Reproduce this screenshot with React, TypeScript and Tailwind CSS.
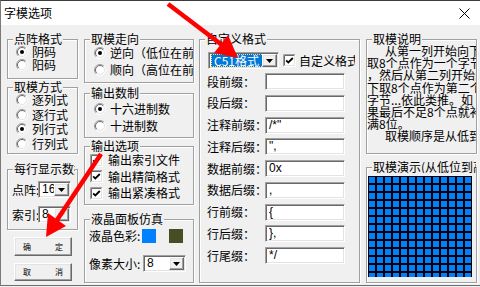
import React from 'react';

// Win classic 3D borders
const SUNKEN =
  'border border-t-[#a0a0a0] border-l-[#a0a0a0] border-b-white border-r-white shadow-[inset_1px_1px_0_#696969,inset_-1px_-1px_0_#e3e3e3]';
const RAISED =
  'border border-t-white border-l-white border-b-[#696969] border-r-[#696969] shadow-[inset_-1px_-1px_0_#a0a0a0,inset_1px_1px_0_#e3e3e3]';

function Group({
  title,
  className = '',
  titleClass = '',
  children,
}: {
  title: string;
  className?: string;
  titleClass?: string;
  children?: React.ReactNode;
}) {
  return (
    <div
      className={`flex flex-col border border-[#a0a0a0] shadow-[inset_1px_1px_0_#fff,1px_1px_0_#fff] ${className}`}
    >
      <div
        className={`-mt-[8px] ml-[5px] px-[1px] w-fit leading-[13px] bg-[#f0f0f0] whitespace-nowrap shrink-0 ${titleClass}`}
      >
        {title}
      </div>
      {children}
    </div>
  );
}

function Radio({ checked }: { checked?: boolean }) {
  return (
    <svg width="12" height="12" viewBox="0 0 12 12" className="shrink-0">
      <circle cx="6" cy="6" r="5" fill="#fff" />
      <path d="M2.1 9.9A5.5 5.5 0 0 1 9.9 2.1" fill="none" stroke="#a0a0a0" />
      <path d="M9.9 2.1A5.5 5.5 0 0 1 2.1 9.9" fill="none" stroke="#fff" />
      <path d="M2.8 9.2A4.5 4.5 0 0 1 9.2 2.8" fill="none" stroke="#696969" />
      <path d="M9.2 2.8A4.5 4.5 0 0 1 2.8 9.2" fill="none" stroke="#e3e3e3" />
      {checked && <circle cx="6" cy="6" r="2" fill="#000" />}
    </svg>
  );
}

function Check() {
  return (
    <svg width="13" height="13" viewBox="0 0 13 13" className="shrink-0">
      <rect width="13" height="13" fill="#fff" />
      <path d="M0.5 12.5V0.5H12.5" stroke="#a0a0a0" fill="none" />
      <path d="M1.5 11.5V1.5H11.5" stroke="#696969" fill="none" />
      <path d="M0.5 12.5H12.5V0.5" stroke="#fff" fill="none" />
      <path d="M1.5 11.5H11.5V1.5" stroke="#e3e3e3" fill="none" />
      <path d="M3.2 6.3L5.3 8.5L9.8 4" stroke="#000" strokeWidth="1.8" fill="none" />
    </svg>
  );
}

function RadioRow({ label, checked, className = '' }: { label: string; checked?: boolean; className?: string }) {
  return (
    <div className={`flex items-center whitespace-nowrap shrink-0 ${className}`}>
      <Radio checked={checked} />
      <span className="ml-[4px]">{label}</span>
    </div>
  );
}

function CheckRow({ label }: { label: string }) {
  return (
    <div className="flex items-center h-[14px] whitespace-nowrap">
      <Check />
      <span className="ml-[5px]">{label}</span>
    </div>
  );
}

function Combo({
  value,
  className = '',
  dim,
  selected,
}: {
  value: string;
  className?: string;
  dim?: boolean;
  selected?: boolean;
}) {
  return (
    <div className={`flex h-[17px] bg-white p-[1px] shrink-0 ${SUNKEN} ${className}`}>
      <div className="flex-1 min-w-0 flex items-center pl-[1px] overflow-hidden whitespace-nowrap">
        {selected ? (
          <span className="h-[13px] leading-[11px] pl-[2px] pr-[4px] bg-[#0078d7] text-white border border-dotted border-[#f7d88a]">
            {value}
          </span>
        ) : (
          <span className="pl-[1px] leading-[13px] font-['Liberation_Sans','Noto_Sans_CJK_SC',sans-serif]">
            {value}
          </span>
        )}
      </div>
      <div className={`w-[15px] h-full flex items-center justify-center bg-[#f0f0f0] ${RAISED}`}>
        <svg width="7" height="4" viewBox="0 0 7 4">
          <path d="M0 0H7L3.5 4Z" fill={dim ? '#b0b0b0' : '#000'} />
        </svg>
      </div>
    </div>
  );
}

function Field({ label, value }: { label: string; value: string }) {
  return (
    <div className="flex items-center h-[17px] shrink-0">
      <span className="w-[58px] whitespace-nowrap">{label}</span>
      <div
        className={`w-[80px] h-[17px] bg-white pl-[3px] leading-[15px] whitespace-pre font-['Liberation_Sans',sans-serif] ${SUNKEN}`}
      >
        {value}
      </div>
    </div>
  );
}

function WinButton({ a, b, className = '' }: { a: string; b: string; className?: string }) {
  return (
    <div
      className={`flex items-center justify-between ml-[7px] w-[58px] px-[8px] text-[8px] leading-[8px] bg-[#f0f0f0] ${RAISED} ${className}`}
    >
      <span>{a}</span>
      <span>{b}</span>
    </div>
  );
}

const fields: [string, string][] = [
  ['段前缀：', ''],
  ['段后缀：', ''],
  ['注释前缀：', '/*"'],
  ['注释后缀：', '",'],
  ['数据前缀：', '0x'],
  ['数据后缀：', ','],
  ['行前缀：', '{'],
  ['行后缀：', '},'],
  ['行尾缀：', '*/'],
];

const help = [
  { t: '从第一列开始向下', indent: true },
  { t: '取8个点作为一个字节' },
  { t: '，然后从第二列开始向' },
  { t: '下取8个点作为第二个' },
  { t: '字节...依此类推。如' },
  { t: '果最后不足8个点就补' },
  { t: '满8位。' },
  { t: '取模顺序是从低到高', indent: true },
];

export default function App() {
  return (
    <div className="relative w-[480px] h-[287px] overflow-hidden bg-[#f0f0f0] text-black text-[12px] leading-[14px] font-['Noto_Sans_CJK_SC',sans-serif]">
      <div className="flex flex-col h-[286px] border-l border-t border-b border-l-[#7a7a7a] border-t-[#3c3c3c] border-b-[#6e6e6e]">
        {/* title bar */}
        <div className="flex items-center justify-between h-[24px] shrink-0 bg-white pl-[3px] pr-[10px]">
          <span>字模选项</span>
          <svg width="11" height="11" viewBox="0 0 11 11">
            <path d="M0.5 0.5L10.5 10.5M10.5 0.5L0.5 10.5" stroke="#000" strokeWidth="1" />
          </svg>
        </div>

        {/* body */}
        <div className="flex pt-[14px] pl-[6px]">
          {/* column 1 */}
          <div className="flex flex-col w-[71px] shrink-0">
            <Group title="点阵格式" className="h-[40px]">
              <div className="flex flex-col pl-[8px]">
                <RadioRow label="阴码" checked className="h-[13px]" />
                <RadioRow label="阳码" className="h-[13px]" />
              </div>
            </Group>
            <Group title="取模方式" className="h-[67px] mt-[8px]">
              <div className="flex flex-col pl-[8px]">
                <RadioRow label="逐列式" className="h-[14.5px]" />
                <RadioRow label="逐行式" className="h-[14.5px]" />
                <RadioRow label="列行式" checked className="h-[14.5px]" />
                <RadioRow label="行列式" className="h-[14.5px]" />
              </div>
            </Group>
            <Group title="每行显示数据" titleClass="max-w-[62px] overflow-hidden" className="h-[61px] mt-[15px]">
              <div className="flex items-center pl-[4px] mt-[6px]">
                <span className="w-[26px] whitespace-nowrap">点阵:</span>
                <Combo value="16" className="w-[33px]" />
              </div>
              <div className="flex items-center pl-[4px] mt-[8px]">
                <span className="w-[26px] whitespace-nowrap">索引:</span>
                <Combo value="8" className="w-[33px]" dim />
              </div>
            </Group>
            <WinButton a="确" b="定" className="mt-[7px] h-[19px]" />
            <WinButton a="取" b="消" className="mt-[7px] h-[18px]" />
          </div>

          {/* column 2 */}
          <div className="flex flex-col w-[110px] ml-[6px] shrink-0">
            <Group title="取模走向" className="h-[44px]">
              <div className="flex flex-col pl-[9px] pt-[1px] gap-[3px] overflow-hidden">
                <RadioRow label="逆向（低位在前）" checked className="h-[14px]" />
                <RadioRow label="顺向（高位在前）" className="h-[14px]" />
              </div>
            </Group>
            <Group title="输出数制" className="h-[45px] mt-[10px]">
              <div className="flex flex-col pl-[9px] pt-[3px] gap-[3px] overflow-hidden">
                <RadioRow label="十六进制数" checked className="h-[14px]" />
                <RadioRow label="十进制数" className="h-[14px]" />
              </div>
            </Group>
            <Group title="输出选项" className="h-[59px] mt-[8px]">
              <div className="flex flex-col pl-[5px] pt-[1px] gap-[2.5px] overflow-hidden">
                <CheckRow label="输出索引文件" />
                <CheckRow label="输出精简格式" />
                <CheckRow label="输出紧凑格式" />
              </div>
            </Group>
            <Group title="液晶面板仿真" className="h-[64px] mt-[14px]">
              <div className="flex items-center h-[14px] mt-[4px] pl-[4px]">
                <span className="w-[53px] whitespace-nowrap">液晶色彩:</span>
                <div className="w-[14px] h-[14px] bg-[#0080ff]" />
                <div className="w-[14px] h-[14px] ml-[13px] bg-[#494d23]" />
              </div>
              <div className="flex items-center mt-[12px] pl-[4px]">
                <span className="w-[54px] whitespace-nowrap">像素大小:</span>
                <Combo value="8" className="w-[43px]" />
              </div>
            </Group>
          </div>

          {/* column 3 */}
          <div className="flex flex-col w-[161px] ml-[5px] shrink-0">
            <Group title="自定义格式" className="h-[244px]">
              <div className="flex items-center mt-[7px] pl-[8px]">
                <Combo value="C51格式" selected className="w-[71px]" />
                <div className="ml-[4px]">
                  <Check />
                </div>
                <span className="ml-[3px] w-[56px] overflow-hidden whitespace-nowrap">自定义格式</span>
              </div>
              <div className="flex flex-col gap-[4.75px] mt-[4px] pl-[7px]">
                {fields.map(([l, v]) => (
                  <Field key={l} label={l} value={v} />
                ))}
              </div>
            </Group>
          </div>

          {/* column 4 */}
          <div className="flex flex-col w-[111px] ml-[6px] shrink-0">
            <Group title="取模说明" className="h-[115px]">
              <div className="flex flex-col overflow-hidden leading-[12.2px]">
                {help.map((h) => (
                  <div key={h.t} className={`whitespace-nowrap ${h.indent ? 'pl-[18px]' : ''}`}>
                    {h.t}
                  </div>
                ))}
              </div>
            </Group>
            <Group
              title="取模演示(从低位到高位)"
              titleClass="max-w-[104px] overflow-hidden"
              className="h-[116px] mt-[13px]"
            >
              <div className="mt-[3px] ml-[1px] w-[104px] h-[101px] overflow-hidden bg-black p-[1px]">
                <div className="grid grid-cols-[repeat(13,6px)] gap-[2px]">
                  {Array.from({ length: 169 }).map((_, i) => (
                    <div key={i} className="w-[6px] h-[6px] bg-[#0080ff]" />
                  ))}
                </div>
              </div>
            </Group>
          </div>
        </div>
      </div>

      {/* red annotation arrows */}
      <svg className="absolute inset-0 pointer-events-none" width="480" height="287" viewBox="0 0 480 287">
        <line x1="168" y1="4" x2="222" y2="45" stroke="#ff0000" strokeWidth="4.5" />
        <polygon points="238,58 214,53 228,35" fill="#ff0000" />
        <line x1="101" y1="154" x2="57" y2="220" stroke="#ff0000" strokeWidth="4.5" />
        <polygon points="46,237 48,213 66,226" fill="#ff0000" />
      </svg>
    </div>
  );
}
